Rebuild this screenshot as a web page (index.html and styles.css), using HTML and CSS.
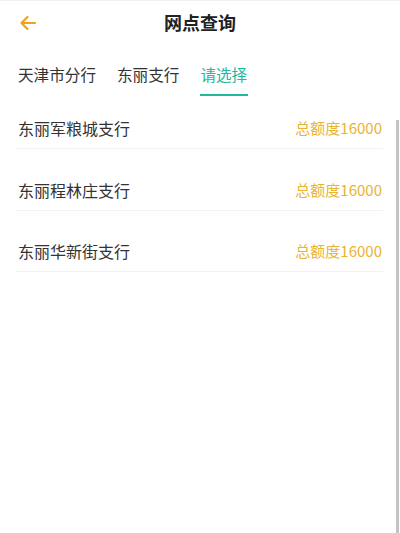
FILE: index.html
```html
<!DOCTYPE html>
<html lang="zh-CN">
<head>
<meta charset="utf-8">
<title>网点查询</title>
<link rel="stylesheet" href="styles.css">
</head>
<body>
<div class="page">
  <header class="header">
    <span class="back">
      <svg width="18" height="16" viewBox="0 0 18 16"><path d="M16 8H2.5M8.5 2L2.5 8L8.5 14" fill="none" stroke="#f2a218" stroke-width="2.2" stroke-linecap="round" stroke-linejoin="round"/></svg>
    </span>
    <h1 class="title">网点查询</h1>
  </header>
  <nav class="tabs">
    <span class="tab">天津市分行</span>
    <span class="tab">东丽支行</span>
    <span class="tab active">请选择</span>
  </nav>
  <ul class="list">
    <li class="row"><span class="name">东丽军粮城支行</span><span class="amount">总额度16000</span></li>
    <li class="row"><span class="name">东丽程林庄支行</span><span class="amount">总额度16000</span></li>
    <li class="row"><span class="name">东丽华新街支行</span><span class="amount">总额度16000</span></li>
  </ul>
  <div class="scrollbar"></div>
</div>
</body>
</html>
```

FILE: styles.css
```css
* { box-sizing: border-box; }
html, body { margin: 0; padding: 0; background: #fff; }
body {
  font-family: "Noto Sans CJK SC", "Noto Sans", sans-serif;
  color: #333;
}
.page {
  position: relative;
  width: 400px;
  height: 533px;
  overflow: hidden;
  border-top: 1px solid #f0f0f0;
}
.header {
  position: relative;
  height: 45px;
  display: flex;
  align-items: flex-start;
  justify-content: center;
  padding-top: 9px;
}
.back {
  position: absolute;
  left: 19px;
  top: 14px;
  display: flex;
}
.title {
  margin: 0;
  font-size: 18px;
  font-weight: 700;
  color: #222;
  line-height: 24px;
}
.tabs {
  display: flex;
  gap: 21px;
  padding: 0 18px;
  height: 52px;
}
.tab {
  font-size: 15.6px;
  line-height: 22px;
  padding-top: 17px;
  color: #333;
  position: relative;
}
.tab.active {
  color: #22b89b;
}
.tab.active::after {
  content: "";
  position: absolute;
  left: 0;
  right: -1px;
  top: 48px;
  height: 2px;
  background: #22b89b;
}
.list {
  list-style: none;
  margin: 0;
  padding: 0 16px 0 16px;
}
.row {
  display: flex;
  justify-content: space-between;
  align-items: center;
  padding: 29.5px 1px 9px 2px;
  line-height: 22px;
  border-bottom: 1px solid #f2f2f2;
  margin-right: 1px;
}
.row:first-child { padding-top: 19px; }
.name { font-size: 16px; color: #333; }
.amount { font-size: 15px; color: #e9b431; }
.scrollbar {
  position: absolute;
  right: 1px;
  top: 119px;
  bottom: 0;
  width: 3px;
  background: #c4c4c4;
}
```
